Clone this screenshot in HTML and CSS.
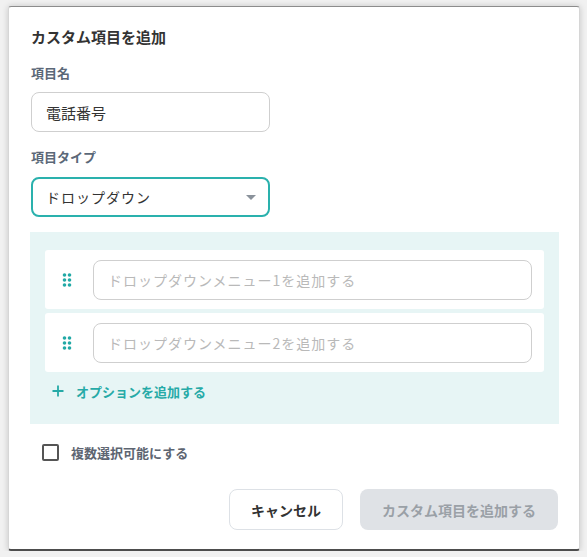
FILE: index.html
```html
<!DOCTYPE html>
<html lang="ja">
<head>
    <meta charset="UTF-8">
    <meta name="viewport" content="width=device-width, initial-scale=1.0">
    <title>カスタム項目を追加</title>
    <link rel="stylesheet" href="styles.css">
</head>
<body>
    <div class="dialog">
        <h1 class="dialog-title">カスタム項目を追加</h1>

        <label class="field-label" for="field-name">項目名</label>
        <input type="text" id="field-name" class="text-input" value="電話番号">

        <label class="field-label label-type" for="field-type">項目タイプ</label>
        <div class="select-box" id="field-type">
            <span>ドロップダウン</span>
            <span class="select-arrow"></span>
        </div>

        <div class="options-panel">
            <div class="option-list">
                <div class="option-row">
                    <svg class="drag-handle" width="10" height="16" viewBox="0 0 10 16">
                        <circle cx="2.5" cy="3" r="1.8"/><circle cx="7.5" cy="3" r="1.8"/>
                        <circle cx="2.5" cy="8" r="1.8"/><circle cx="7.5" cy="8" r="1.8"/>
                        <circle cx="2.5" cy="13" r="1.8"/><circle cx="7.5" cy="13" r="1.8"/>
                    </svg>
                    <input type="text" class="option-input" placeholder="ドロップダウンメニュー1を追加する">
                </div>
                <div class="option-row">
                    <svg class="drag-handle" width="10" height="16" viewBox="0 0 10 16">
                        <circle cx="2.5" cy="3" r="1.8"/><circle cx="7.5" cy="3" r="1.8"/>
                        <circle cx="2.5" cy="8" r="1.8"/><circle cx="7.5" cy="8" r="1.8"/>
                        <circle cx="2.5" cy="13" r="1.8"/><circle cx="7.5" cy="13" r="1.8"/>
                    </svg>
                    <input type="text" class="option-input" placeholder="ドロップダウンメニュー2を追加する">
                </div>
            </div>

            <button class="add-option">
                <svg width="12" height="12" viewBox="0 0 12 12">
                    <path d="M6 0.5V11.5M0.5 6H11.5" stroke="currentColor" stroke-width="1.8" fill="none"/>
                </svg>
                <span>オプションを追加する</span>
            </button>
        </div>

        <label class="check-row">
            <span class="checkbox"></span>
            <span>複数選択可能にする</span>
        </label>

        <div class="dialog-actions">
            <button class="btn btn-cancel">キャンセル</button>
            <button class="btn btn-submit" disabled>カスタム項目を追加する</button>
        </div>
    </div>
</body>
</html>
```

FILE: styles.css
```css
* {
    margin: 0;
    padding: 0;
    box-sizing: border-box;
}

body {
    font-family: "Noto Sans CJK JP", "Noto Sans", sans-serif;
    background: #f1f1f1;
    padding: 6px 7px 0 8px;
    color: #333;
}

.dialog {
    width: 572px;
    height: 545px;
    background: white;
    border: 1px solid #d6d6d6;
    border-top-color: #8c8c8c;
    border-bottom: 2px solid #4d4d4d;
    border-radius: 3px;
    box-shadow: 0 0 6px rgba(0,0,0,0.18);
    padding: 19px 20px 0 21px;
    display: flex;
    flex-direction: column;
}

.dialog-title {
    font-size: 15px;
    font-weight: bold;
    line-height: 22px;
    color: #333;
    margin-left: 1px;
    margin-bottom: 15px;
}

.field-label {
    font-size: 13px;
    font-weight: bold;
    line-height: 20px;
    color: #5b6878;
    margin-left: 1px;
    margin-bottom: 9px;
}

.label-type {
    margin-top: 15px;
    margin-bottom: 10px;
}

.text-input {
    width: 239px;
    height: 40px;
    margin-left: 1px;
    border: 1px solid #cfcfcf;
    border-radius: 8px;
    padding: 0 14px;
    font-family: inherit;
    font-size: 15px;
    color: #333;
    outline: none;
}

.select-box {
    width: 239px;
    height: 40px;
    margin-left: 1px;
    border: 2px solid #2ab1ad;
    border-radius: 8px;
    padding: 0 12px 0 13px;
    display: flex;
    align-items: center;
    justify-content: space-between;
    font-size: 14px;
    letter-spacing: 1px;
    color: #333;
}

.select-arrow {
    width: 0;
    height: 0;
    border-left: 5px solid transparent;
    border-right: 5px solid transparent;
    border-top: 5px solid #8a929b;
    margin-top: 1px;
}

.options-panel {
    margin-top: 15px;
    height: 192px;
    background: #e7f5f5;
    padding: 18px 15px 0 15px;
}

.option-list {
    display: flex;
    flex-direction: column;
    gap: 4px;
}

.option-row {
    height: 59px;
    background: white;
    border-radius: 3px;
    display: flex;
    align-items: center;
    padding: 0 12px 0 17px;
}

.drag-handle {
    fill: #22a9a6;
    margin-right: 21px;
    flex-shrink: 0;
}

.option-input {
    flex: 1;
    height: 40px;
    border: 1px solid #cfcfcf;
    border-radius: 8px;
    padding: 0 14px;
    font-family: inherit;
    font-size: 14px;
    letter-spacing: 1px;
    outline: none;
}

.option-input::placeholder {
    color: #b9b9b9;
}

.add-option {
    margin-top: 9px;
    margin-left: 7px;
    height: 20px;
    background: none;
    border: none;
    display: flex;
    align-items: center;
    gap: 12px;
    font-family: inherit;
    font-size: 13px;
    font-weight: bold;
    color: #26aaa7;
    cursor: pointer;
}

.check-row {
    margin-top: 18px;
    margin-left: 12px;
    height: 20px;
    display: flex;
    align-items: center;
    gap: 12px;
    font-size: 13px;
    font-weight: bold;
    color: #5d6571;
}

.checkbox {
    width: 17px;
    height: 17px;
    border: 2px solid #555;
    border-radius: 2px;
}

.dialog-actions {
    margin-top: 27px;
    display: flex;
    justify-content: flex-end;
    gap: 17px;
    padding-right: 1px;
}

.btn {
    height: 41px;
    border-radius: 8px;
    font-family: inherit;
    font-weight: bold;
    cursor: pointer;
}

.btn-cancel {
    width: 114px;
    background: white;
    border: 1px solid #dde1e6;
    font-size: 14px;
    color: #333;
}

.btn-submit {
    width: 198px;
    background: #dfe2e6;
    border: none;
    font-size: 14px;
    color: #9aa0a6;
    cursor: default;
}
```
